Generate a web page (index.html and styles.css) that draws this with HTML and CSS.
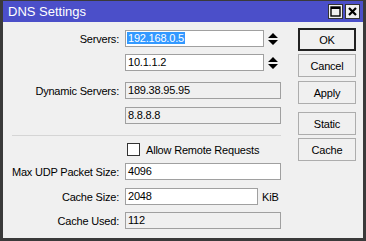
FILE: index.html
```html
<!DOCTYPE html>
<html>
<head>
<meta charset="utf-8">
<link rel="stylesheet" href="styles.css">
</head>
<body>
<div class="window">
  <div class="titlebar">
    <span class="title">DNS Settings</span>
    <div class="tbtns">
      <span class="tbtn"><svg width="11" height="11" viewBox="0 0 11 11"><rect x="1" y="1" width="9" height="9" fill="none" stroke="#000" stroke-width="1.4"/><rect x="1" y="1" width="9" height="2" fill="#000"/></svg></span>
      <span class="tbtn"><svg width="11" height="11" viewBox="0 0 11 11"><path d="M2 2 L9 9 M9 2 L2 9" stroke="#000" stroke-width="2.2"/></svg></span>
    </div>
  </div>
  <div class="content">
    <div class="form">
      <div class="row r1">
        <label class="lbl">Servers:</label>
        <div class="field edit short"><span class="sel">192.168.0.5</span></div>
        <svg class="spin" width="10" height="12" viewBox="0 0 10 12"><path d="M5 0 L10 5 L0 5 Z M0 7 L10 7 L5 12 Z" fill="#000"/></svg>
      </div>
      <div class="row r2">
        <label class="lbl"></label>
        <div class="field edit short">10.1.1.2</div>
        <svg class="spin" width="10" height="12" viewBox="0 0 10 12"><path d="M5 0 L10 5 L0 5 Z M0 7 L10 7 L5 12 Z" fill="#000"/></svg>
      </div>
      <div class="row r3">
        <label class="lbl">Dynamic Servers:</label>
        <div class="field ro wide">189.38.95.95</div>
      </div>
      <div class="row r4">
        <label class="lbl"></label>
        <div class="field ro wide">8.8.8.8</div>
      </div>
      <div class="sep"></div>
      <div class="row chkrow">
        <label class="lbl"></label>
        <span class="chk"></span><span class="chktext">Allow Remote Requests</span>
      </div>
      <div class="row r6">
        <label class="lbl">Max UDP Packet Size:</label>
        <div class="field edit wide">4096</div>
      </div>
      <div class="row r7">
        <label class="lbl">Cache Size:</label>
        <div class="field edit mid">2048</div>
        <span class="unit">KiB</span>
      </div>
      <div class="row r8">
        <label class="lbl">Cache Used:</label>
        <div class="field ro wide">112</div>
      </div>
    </div>
    <div class="buttons">
      <button class="btn def">OK</button>
      <button class="btn b2">Cancel</button>
      <button class="btn b3">Apply</button>
      <button class="btn b4">Static</button>
      <button class="btn b5">Cache</button>
    </div>
  </div>
</div>
</body>
</html>
```
FILE: styles.css
```css
html, body {
  margin: 0;
  padding: 0;
  background: #f0f0f0;
}
body {
  font-family: "Liberation Sans", Arial, sans-serif;
  font-size: 11px;
  letter-spacing: -0.2px;
  color: #000;
}
.window {
  width: 366px;
  height: 241px;
  box-sizing: border-box;
  border: 3px solid #3a3a3a;
  border-top-width: 1px;
  background: #f0f0f0;
  overflow: hidden;
}
.titlebar {
  height: 21px;
  background: #4b4fc9;
  display: flex;
  align-items: center;
  justify-content: space-between;
  padding: 0 3px 0 5px;
}
.title {
  color: #fff;
  font-size: 13px;
  letter-spacing: 0;
}
.tbtns {
  display: flex;
  gap: 2px;
}
.tbtn {
  width: 15px;
  height: 15px;
  box-sizing: border-box;
  border: 1px solid #333;
  background: #f0f0f0;
  display: flex;
  align-items: center;
  justify-content: center;
}
.content {
  display: flex;
  padding-top: 7px;
}
.form {
  width: 278px;
}
.row {
  display: flex;
  align-items: center;
  height: 17px;
}
.r1 { margin-top: 1px; }
.r2 { margin-top: 7px; }
.r3 { margin-top: 11px; }
.r4 { margin-top: 8px; }
.chkrow { margin-top: 7px; height: 13px; }
.r6 { margin-top: 7px; }
.r7 { margin-top: 8px; }
.r8 { margin-top: 7px; }
.lbl {
  width: 116px;
  text-align: right;
  margin-right: 6px;
  flex: none;
}
.field {
  box-sizing: border-box;
  height: 17px;
  border: 1px solid #a0a0a0;
  padding: 0 2px;
  line-height: 15px;
  white-space: nowrap;
}
.edit { background: #fff; }
.ro { background: #f0f0f0; }
.short { width: 139px; }
.wide { width: 156px; }
.mid { width: 133px; }
.sel {
  background: #3399ff;
  color: #fff;
  padding: 0 1px;
  margin-left: -1px;
}
.spin {
  margin-left: 4px;
}
.unit {
  margin-left: 4px;
}
.sep {
  margin: 11px 0 0 9px;
  width: 269px;
  height: 1px;
  background: #d5d5d5;
}
.chk {
  width: 13px;
  height: 13px;
  box-sizing: border-box;
  border: 1px solid #333;
  background: #fff;
  margin-left: 2px;
}
.chktext {
  margin-left: 6px;
}
.buttons {
  margin-left: 17px;
  display: flex;
  flex-direction: column;
}
.btn {
  width: 58px;
  height: 23px;
  box-sizing: border-box;
  border: 1px solid #adadad;
  background: #f0f0f0;
  font-family: "Liberation Sans", Arial, sans-serif;
  font-size: 11px;
  letter-spacing: -0.2px;
  color: #000;
  padding: 0;
  margin: 0;
}
.btn.def {
  border: 2px solid #222;
  margin-top: -1px;
}
.b2 { margin-top: 3px; }
.b3 { margin-top: 4px; }
.b4 { margin-top: 8px; }
.b5 { margin-top: 3px; }
```
